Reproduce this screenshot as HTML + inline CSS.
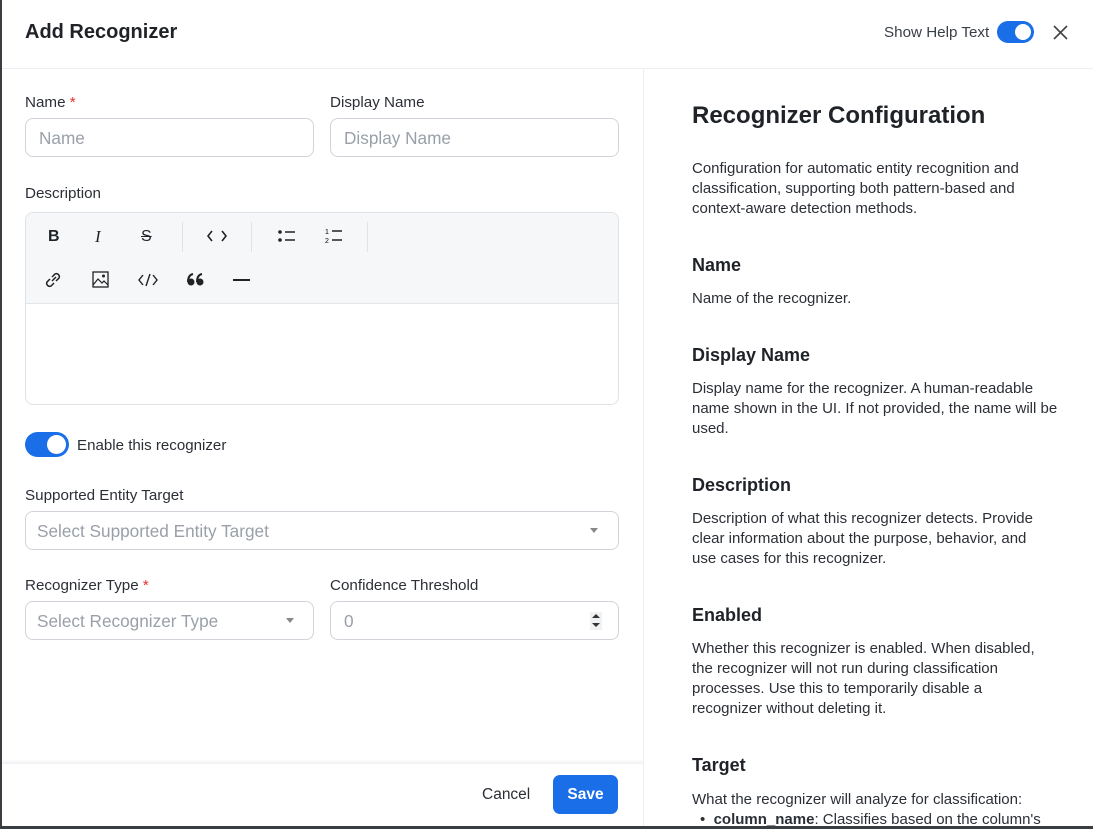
<!DOCTYPE html>
<html><head><meta charset="utf-8"><style>
*{box-sizing:border-box;margin:0;padding:0}
body{width:1093px;height:829px;overflow:hidden;background:#fff;font-family:"Liberation Sans",sans-serif;color:#1f2328;position:relative}
.a{position:absolute}
.lbl{font-size:15.2px;color:#2b2f36}
.req{color:#e5322d}
.inp{border:1px solid #d0d4da;border-radius:8px;height:39px;font-size:17.2px;color:#9aa0a8;padding:0 13px;line-height:39px}
.rp p{font-size:15px;line-height:20px;color:#2b2f36}
.rp h3{font-size:18px;font-weight:bold;color:#1f2328}
.tgl{width:44px;height:25px;border-radius:13px;background:#1a6fe8}
.tgl i{position:absolute;right:3px;top:3px;width:19px;height:19px;border-radius:50%;background:#fff}
svg{position:absolute}
</style></head><body>
<div class="a" style="left:0;top:0;width:2px;height:829px;background:#3a3d42"></div>
<div class="a" style="left:0;bottom:0;width:1093px;height:3px;background:#3a3d42"></div>
<div class="a" style="left:25px;top:21px;font-size:20px;font-weight:bold">Add Recognizer</div>
<div class="a" style="left:884px;top:24px;font-size:15.2px;color:#3a3f47">Show Help Text</div>
<div class="a tgl" style="left:997px;top:21px;width:37px;height:22px"><i style="width:16px;height:16px;top:3px;right:3px"></i></div>
<svg style="left:1053px;top:25px" width="15" height="15" viewBox="0 0 15 15"><path d="M1 1L14 14M14 1L1 14" stroke="#444" stroke-width="1.6"/></svg>
<div class="a" style="left:2px;top:68px;width:1091px;height:1px;background:#eceef1"></div>
<div class="a" style="left:643px;top:69px;width:1px;height:757px;background:#eceef1"></div>

<div class="a lbl" style="left:25px;top:94px">Name <span class="req">*</span></div>
<div class="a inp" style="left:25px;top:118px;width:289px">Name</div>
<div class="a lbl" style="left:330px;top:94px">Display Name</div>
<div class="a inp" style="left:330px;top:118px;width:289px">Display Name</div>
<div class="a lbl" style="left:25px;top:185px">Description</div>
<div class="a" style="left:25px;top:212px;width:594px;height:193px;border:1px solid #dfe2e6;border-radius:8px;overflow:hidden">
 <div style="height:91px;background:#f6f7f9;border-bottom:1px solid #e3e6ea"></div>
</div>
<div class="a" style="left:48px;top:228px;font-size:16px;font-weight:bold">B</div>
<div class="a" style="left:95px;top:227px;font-size:17px;font-style:italic;font-family:'Liberation Serif',serif">I</div>
<div class="a" style="left:141px;top:228px;font-size:16px;text-decoration:line-through">S</div>
<div class="a" style="left:182px;top:222px;width:1px;height:30px;background:#e1e3e6"></div>
<svg style="left:207px;top:230px" width="20" height="12" viewBox="0 0 20 12"><path d="M5 1L1 6L5 11M15 1L19 6L15 11" fill="none" stroke="#222" stroke-width="1.6"/></svg>
<div class="a" style="left:251px;top:222px;width:1px;height:30px;background:#e1e3e6"></div>
<svg style="left:278px;top:229px" width="18" height="14"><circle cx="2" cy="3" r="1.8" fill="#222"/><circle cx="2" cy="11" r="1.8" fill="#222"/><path d="M7 3H17M7 11H17" stroke="#222" stroke-width="1.4"/></svg>
<svg style="left:325px;top:227px" width="18" height="18"><text x="0" y="7" font-size="7" font-family="Liberation Sans">1</text><text x="0" y="16" font-size="7" font-family="Liberation Sans">2</text><path d="M7 4H17M7 13H17" stroke="#222" stroke-width="1.4"/></svg>
<div class="a" style="left:367px;top:222px;width:1px;height:30px;background:#e1e3e6"></div>
<svg style="left:44px;top:271px" width="20" height="18" viewBox="0 0 20 18"><path d="M8 10l4-4M6 8l-3 3a3 3 0 004 4l3-3M12 10l3-3a3 3 0 00-4-4l-3 3" fill="none" stroke="#222" stroke-width="1.5"/></svg>
<svg style="left:92px;top:271px" width="17" height="17"><rect x="1" y="1" width="15" height="15" fill="none" stroke="#222" stroke-width="1.3"/><path d="M1 14L6 8L10 12L12 10L16 14" fill="none" stroke="#222" stroke-width="1.2"/><circle cx="11.5" cy="5" r="1.5" fill="#222"/></svg>
<svg style="left:138px;top:273px" width="20" height="14"><path d="M5 2L1 7L5 12M15 2L19 7L15 12M12 1L8 13" fill="none" stroke="#222" stroke-width="1.4"/></svg>
<svg style="left:187px;top:273px" width="17" height="13"><circle cx="4" cy="9" r="3.5" fill="#222"/><circle cx="13" cy="9" r="3.5" fill="#222"/><path d="M1 9Q1 2 6 1M10 9Q10 2 15 1" fill="none" stroke="#222" stroke-width="2"/></svg>
<div class="a" style="left:233px;top:279px;width:17px;height:1.6px;background:#222"></div>

<div class="a tgl" style="left:25px;top:432px"><i></i></div>
<div class="a" style="left:77px;top:437px;font-size:15.1px;color:#2b2f36">Enable this recognizer</div>
<div class="a lbl" style="left:25px;top:487px">Supported Entity Target</div>
<div class="a inp" style="left:25px;top:511px;width:594px;padding-left:11px">Select Supported Entity Target</div>
<div class="a" style="left:590px;top:528px;border:4px solid transparent;border-top:5px solid #888"></div>
<div class="a lbl" style="left:25px;top:577px">Recognizer Type <span class="req">*</span></div>
<div class="a inp" style="left:25px;top:601px;width:289px;padding-left:11px">Select Recognizer Type</div>
<div class="a" style="left:286px;top:618px;border:4px solid transparent;border-top:5px solid #888"></div>
<div class="a lbl" style="left:330px;top:577px">Confidence Threshold</div>
<div class="a inp" style="left:330px;top:601px;width:289px">0</div>
<div class="a" style="left:590px;top:612px;width:12px;height:18px;background:#f0f1f3"></div>
<div class="a" style="left:592px;top:614px;border:4px solid transparent;border-bottom:4px solid #333;border-top:0"></div>
<div class="a" style="left:592px;top:623px;border:4px solid transparent;border-top:4px solid #333;border-bottom:0"></div>

<div class="a" style="left:2px;top:759px;width:641px;height:5px;background:linear-gradient(#fff,#f0f1f3)"></div>
<div class="a" style="left:482px;top:786px;font-size:15.5px;color:#2b2f36">Cancel</div>
<div class="a" style="left:553px;top:775px;width:65px;height:39px;border-radius:7px;background:#1a6fe8;color:#fff;font-size:15.5px;font-weight:bold;text-align:center;line-height:39px">Save</div>

<div class="a rp" style="left:692px;top:0;width:375px">
 <h2 class="a" style="top:102px;font-size:24px;font-weight:bold;white-space:nowrap">Recognizer Configuration</h2>
 <p class="a" style="top:159px;width:345px">Configuration for automatic entity recognition and classification, supporting both pattern-based and context-aware detection methods.</p>
 <h3 class="a" style="top:255px">Name</h3>
 <p class="a" style="top:289px">Name of the recognizer.</p>
 <h3 class="a" style="top:345px">Display Name</h3>
 <p class="a" style="top:379px;width:366px">Display name for the recognizer. A human-readable name shown in the UI. If not provided, the name will be used.</p>
 <h3 class="a" style="top:475px">Description</h3>
 <p class="a" style="top:509px;width:350px">Description of what this recognizer detects. Provide clear information about the purpose, behavior, and use cases for this recognizer.</p>
 <h3 class="a" style="top:605px">Enabled</h3>
 <p class="a" style="top:639px;width:345px">Whether this recognizer is enabled. When disabled, the recognizer will not run during classification processes. Use this to temporarily disable a recognizer without deleting it.</p>
 <h3 class="a" style="top:755px">Target</h3>
 <p class="a" style="top:790px;white-space:nowrap">What the recognizer will analyze for classification:</p>
 <p class="a" style="top:810px;left:8px;white-space:nowrap">•&nbsp; <b>column_name</b>: Classifies based on the column's</p>
</div>
</body></html>
